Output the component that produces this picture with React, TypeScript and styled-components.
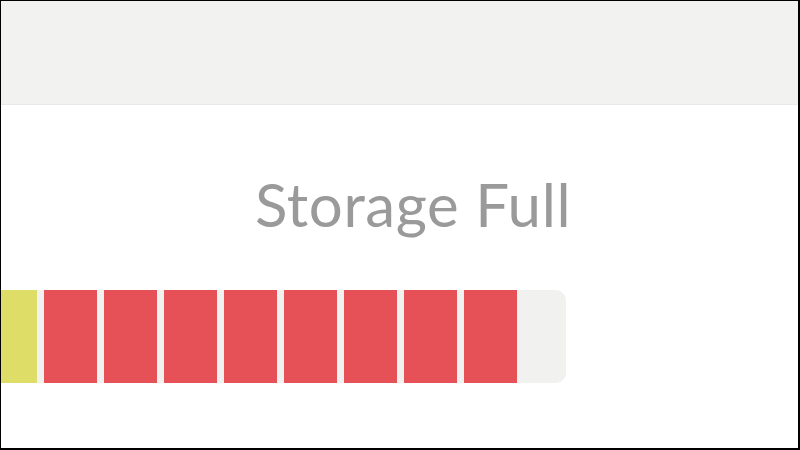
import React from "react";
import styled, { createGlobalStyle } from "styled-components";

const Global = createGlobalStyle`
  html, body { margin: 0; padding: 0; background: #000; }
  * { box-sizing: border-box; }
`;

const Frame = styled.div`
  width: 800px;
  height: 450px;
  border-style: solid;
  border-color: #000;
  border-width: 1px 2px 2px 1px;
  background: #ffffff;
  display: flex;
  flex-direction: column;
  overflow: hidden;
`;

const TopBand = styled.div`
  height: 104px;
  flex-shrink: 0;
  background: #f2f2f0;
  border-bottom: 1px solid #e9e9e7;
`;

const Title = styled.h1`
  margin: 64px 0 0 254px;
  font-family: "Lato", "Open Sans", sans-serif;
  font-weight: 400;
  font-size: 60px;
  line-height: 70px;
  color: #9a9a9a;
  letter-spacing: 0.6px;
`;

const Track = styled.div`
  margin-top: 51px;
  width: 565px;
  height: 93px;
  background: #f1f1ef;
  border-radius: 0 10px 10px 0;
  display: flex;
  gap: 7px;
`;

const Segment = styled.div<{ $color: string; $w: number }>`
  width: ${(p) => p.$w}px;
  height: 100%;
  background: ${(p) => p.$color};
  flex-shrink: 0;
`;

export default function App() {
  const reds = Array.from({ length: 8 });
  return (
    <>
      <Global />
      <Frame>
        <TopBand />
        <Title>Storage Full</Title>
        <Track>
          <Segment $color="#dedd68" $w={36} />
          {reds.map((_, i) => (
            <Segment key={i} $color="#e65157" $w={53} />
          ))}
        </Track>
      </Frame>
    </>
  );
}
